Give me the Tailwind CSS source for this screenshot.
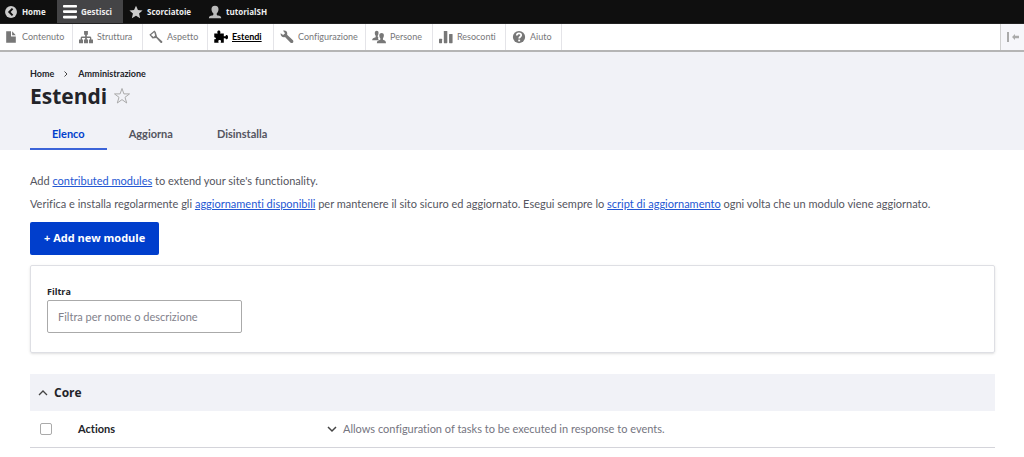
<!DOCTYPE html>
<html lang="it">
<head>
<meta charset="utf-8">
<title>Estendi</title>
<script src="https://cdn.jsdelivr.net/npm/@tailwindcss/browser@4"></script>
</head>
<body class="min-h-screen bg-white font-[Lato,sans-serif] text-[11px] text-[#545560] [font-variant-ligatures:none]">
<nav class="flex h-6 border-b border-[#222] bg-[#0f0f0f] font-['Open_Sans',sans-serif] text-[8px] font-bold text-[#eee]" aria-label="Barra degli strumenti">
  <a href="#" class="flex w-[57px] items-center gap-1 pl-1">
    <svg class="size-3.5" viewBox="0 0 16 16"><circle cx="8" cy="8" r="6.8" fill="#ccc"/><path d="M9.8 4.2 6 8l3.8 3.8" fill="none" stroke="#0f0f0f" stroke-width="2.2"/></svg>Home</a>
  <a href="#" class="flex w-[66px] items-center gap-1 bg-[#444446] pl-1.5">
    <svg class="size-3.5" viewBox="0 0 14 14" fill="#fff"><rect y="0" width="14" height="2.6" rx=".8"/><rect y="5.3" width="14" height="2.6" rx=".8"/><rect y="10.8" width="14" height="2.6" rx=".8"/></svg>Gestisci</a>
  <a href="#" class="flex w-[79px] items-center gap-1 pl-1.5">
    <svg class="size-3.5" viewBox="0 0 16 16" fill="#ccc"><path d="m8 .8 2.2 4.9 5.3.5-4 3.6 1.2 5.4L8 12.4l-4.7 2.8 1.2-5.4-4-3.6 5.3-.5z"/></svg>Scorciatoie</a>
  <a href="#" class="flex items-center gap-1 pl-1.5">
    <svg class="size-3.5" viewBox="0 0 16 16" fill="#bbb"><path d="M8 .8c2.800 0 4.200 1.700 4 4.200-.1 1.900-1 3.600-2 4.500v1.300c0 .7.6 1 1.600 1.300 2 .5 3.500 1 3.500 3.100H1c0-2.100 1.500-2.600 3.500-3.100 1-.3 1.600-.6 1.600-1.300V9.500C5 8.600 4.100 6.900 4 5 3.800 2.500 5.200.8 8 .8z"/></svg>tutorialSH</a>
</nav>
<nav class="flex h-7 border-b-2 border-[#b5b5b5] bg-white text-[9px] text-[#77777a] shadow-sm" aria-label="Menu di amministrazione">
  <a href="#" class="flex w-[73px] items-center gap-1 border-r border-[#e4e4e8] pl-1">
    <svg class="size-3.5" viewBox="0 0 16 16" fill="#777"><path d="M2.500 1.500H8v5.800h5.500v7.200h-11z"/><path d="M9.300 1.500v4.500h4.200z"/></svg>Contenuto</a>
  <a href="#" class="flex w-[70px] items-center gap-1 border-r border-[#e4e4e8] pl-1.5">
    <svg class="size-3.5" viewBox="0 0 16 16" fill="#777"><path d="M5.800 1h4.400v4.400H9v2h3.200c1.300 0 1.900.7 1.900 1.900v1.500H16V15h-4.600v-4.200h1.200V9H9v1.800h1.300V15H5.700v-4.200H7V9H3.400v1.800h1.200V15H0v-4.200h1.900V9.300c0-1.200.6-1.900 1.900-1.900H7v-2H5.800z"/></svg>Struttura</a>
  <a href="#" class="flex w-[65px] items-center gap-1 border-r border-[#e4e4e8] pl-1.5">
    <svg class="size-3.5" viewBox="0 0 16 16" fill="#777"><path fill-rule="evenodd" d="M.4 5.500 6.200.7l1.500 1.600 1.600 5.300 5.700 5.200c1 1-.7 2.900-1.800 1.800L8.300 9 4 9.700zM2.300 5.700 6 2.500l1 3.800-1.700 1.600z"/></svg>Aspetto</a>
  <a href="#" class="flex w-[66px] items-center gap-1 border-r border-[#e4e4e8] pl-1.5 font-bold text-black underline" aria-current="page">
    <svg class="size-3.5" viewBox="0 0 16 16" fill="#000"><path d="M.3 4h4C3.200 2.300 3.800.6 5.500.6S7.800 2.300 6.900 4h4.300v3.200h1.900c.2-1 .8-1.500 1.500-1.500 1.900 0 1.900 5 0 5-.8 0-1.300-.5-1.500-1.400h-1.900v5.200H7.600c.8-2 .3-3-1.100-3s-2 1-1.200 3H.3v-4c2.200.6 2.800-2 0-2.200z"/></svg>Estendi</a>
  <a href="#" class="flex w-[92px] items-center gap-1 border-r border-[#e4e4e8] pl-1.5">
    <svg class="size-3.5" viewBox="0 0 16 16" fill="#777"><path d="M3.500.9c3.200-1 5.500 1.500 4.600 4.600l6.700 6.300c1.500 1.800-1 4.200-2.700 2.700L5.700 8C2.800 8.900.2 6.600.8 3.600l2.800 2 2.200-2z"/></svg>Configurazione</a>
  <a href="#" class="flex w-[67px] items-center gap-1 border-r border-[#e4e4e8] pl-1.5">
    <svg class="size-3.5" viewBox="0 0 16 16" fill="#777"><path d="M5.400.8C8 .8 8 4.400 6.500 6.500v1.300l.8.5c-.7 1-.3 2 .3 2.700l-1 .8H.2c0-2.500 1.600-2.700 4-3.500V6.500C2.700 4.400 2.800.8 5.400.8z"/><path d="M11 3.500c3 0 3.300 3.500 1.500 6v1.600c2 .7 3.500 1.200 3.500 4H5.500c0-2.800 1.700-3.200 4-4V9.500c-1.800-2.500-1.500-6 1.500-6z"/></svg>Persone</a>
  <a href="#" class="flex w-[73px] items-center gap-1 border-r border-[#e4e4e8] pl-1.5">
    <svg class="size-3.5" viewBox="0 0 16 16" fill="#777"><rect x="0" y="10" width="3.500" height="5" rx=".6"/><rect x="5.500" y="1" width="4" height="14" rx=".6"/><rect x="11.500" y="4.500" width="4" height="10.500" rx=".6"/></svg>Resoconti</a>
  <a href="#" class="flex w-14 items-center gap-1 border-r border-[#e4e4e8] pl-1.5">
    <svg class="size-3.5" viewBox="0 0 16 16"><circle cx="8" cy="8" r="7" fill="#777"/><path d="M5.500 6.300C5.500 2.900 10.500 3 10.500 6c0 1.700-2.300 1.700-2.300 3.800" fill="none" stroke="#fff" stroke-width="2"/><rect x="7.100" y="11" width="2.200" height="2" fill="#fff"/></svg>Aiuto</a>
  <button class="ml-auto flex w-6 items-center justify-center border-l border-[#d0d0d0] bg-[#f6f6fa]" aria-label="Orientamento verticale">
    <svg class="h-3 w-3.5" viewBox="0 0 14 12" fill="#aaa"><rect x="1" y="1" width="2" height="10"/><path d="m6 6 3-3v1.700h4v2.600H9V9z"/></svg></button>
</nav>
<header class="bg-[#f1f2f7] px-[30px] pt-4 text-[#232429]">
  <nav class="flex h-3 items-center gap-2.5 text-[9px] font-bold" aria-label="Breadcrumb"><a href="#">Home</a><svg class="h-1.5 w-1" viewBox="0 0 4 6" fill="none" stroke="#444"><path d="m.5.5 2.500 2.500L.5 5.500"/></svg><a href="#">Amministrazione</a></nav>
  <div class="mt-0.5 flex h-7 items-center gap-1.5">
    <h1 class="font-['Open_Sans',sans-serif] text-[21px] leading-7 font-bold">Estendi</h1>
    <button aria-label="Aggiungi alle scorciatoie"><svg class="size-[18px]" viewBox="0 0 18 18" fill="none" stroke="#aaa"><path d="m9 1.500 1.900 5.400h5.600L12 10.300l1.700 5.700L9 12.600 4.300 16 6 10.300 1.500 6.900h5.600z"/></svg></button>
  </div>
  <nav class="mt-2.5 flex h-[30px] text-[11px] font-bold text-[#545560]" aria-label="Schede">
    <a href="#" class="flex items-center border-b-2 border-[#3c64d8] px-[22px] text-[#003ecc]" aria-current="page">Elenco</a>
    <a href="#" class="flex items-center border-b-2 border-transparent px-[22px]">Aggiorna</a>
    <a href="#" class="flex items-center border-b-2 border-transparent px-[22px]">Disinstalla</a>
  </nav>
</header>
<main class="pt-[23px] pr-[29px] pl-[30px]">
  <p class="leading-4">Add <a href="#" class="text-[#2457d3] underline">contributed modules</a> to extend your site's functionality.</p>
  <p class="mt-[7px] leading-4">Verifica e installa regolarmente gli <a href="#" class="text-[#2457d3] underline">aggiornamenti disponibili</a> per mantenere il sito sicuro ed aggiornato. Esegui sempre lo <a href="#" class="text-[#2457d3] underline">script di aggiornamento</a> ogni volta che un modulo viene aggiornato.</p>
  <button class="mt-2.5 block h-[33px] rounded-xs bg-[#003ecc] px-3.5 font-['Open_Sans',sans-serif] font-bold text-white">+ Add new module</button>
  <form class="mt-2.5 flex flex-col items-start rounded-xs border border-[#dedfe4] px-4 pt-[18px] pb-[19px] shadow-sm">
    <label for="filter" class="font-['Open_Sans',sans-serif] text-[9px] leading-4 font-bold text-[#232429]">Filtra</label>
    <input id="filter" type="text" placeholder="Filtra per nome o descrizione" class="h-[33px] w-[195px] rounded-xs border border-[#aaa] px-2.5 placeholder:text-[#82828c]">
  </form>
  <details open class="mt-[21px]">
    <summary class="flex h-[37px] list-none items-center gap-1.5 bg-[#f1f2f7] pl-2 font-['Open_Sans',sans-serif] text-xs font-bold text-[#232429]"><svg class="h-3 w-2.5" viewBox="0 0 10 12" fill="none" stroke="#444" stroke-width="1.300"><path d="m1 8 4-4 4 4"/></svg>Core</summary>
    <table class="w-full table-fixed border-b border-[#d4d4da]">
      <tbody><tr class="h-9">
        <td class="w-12 pl-2.5"><input id="actions" type="checkbox" class="block size-3 appearance-none rounded-xs border border-[#aaa]"></td>
        <td class="w-[249px] font-bold text-[#232429]"><label for="actions">Actions</label></td>
        <td><button class="flex items-center gap-1.5 text-[#75757f]"><svg class="h-3 w-2.5" viewBox="0 0 10 12" fill="none" stroke="#444" stroke-width="1.500"><path d="m1 4 4 4 4-4"/></svg>Allows configuration of tasks to be executed in response to events.</button></td>
      </tr></tbody>
    </table>
  </details>
</main>
</body>
</html>
